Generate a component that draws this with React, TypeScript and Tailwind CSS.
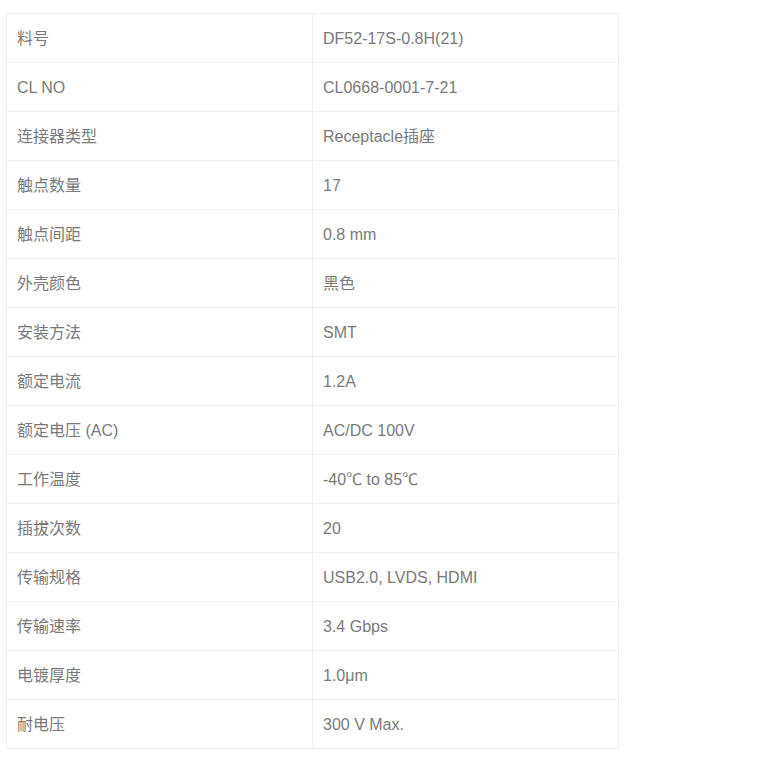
const rows: [string, string][] = [
  ['料号', 'DF52-17S-0.8H(21)'],
  ['CL NO', 'CL0668-0001-7-21'],
  ['连接器类型', 'Receptacle插座'],
  ['触点数量', '17'],
  ['触点间距', '0.8 mm'],
  ['外壳颜色', '黑色'],
  ['安装方法', 'SMT'],
  ['额定电流', '1.2A'],
  ['额定电压 (AC)', 'AC/DC 100V'],
  ['工作温度', '-40℃ to 85℃'],
  ['插拔次数', '20'],
  ['传输规格', 'USB2.0, LVDS, HDMI'],
  ['传输速率', '3.4 Gbps'],
  ['电镀厚度', '1.0μm'],
  ['耐电压', '300 V Max.'],
];

export default function App() {
  return (
    <div className="min-h-screen bg-white pl-[6px] pt-[13px] font-['Liberation_Sans','Noto_Sans_CJK_SC',sans-serif]">
      <table className="w-[613px] table-fixed border-collapse border border-[#efefef] text-[16px] text-[#7a7a7a]">
        <colgroup>
          <col className="w-[306px]" />
          <col />
        </colgroup>
        <tbody>
          {rows.map(([label, value]) => (
            <tr key={label} className="h-[49px]">
              <td className="border border-[#efefef] px-[10px] pt-[2px] align-middle">{label}</td>
              <td className="border border-[#efefef] px-[10px] pt-[2px] align-middle">{value}</td>
            </tr>
          ))}
        </tbody>
      </table>
    </div>
  );
}
